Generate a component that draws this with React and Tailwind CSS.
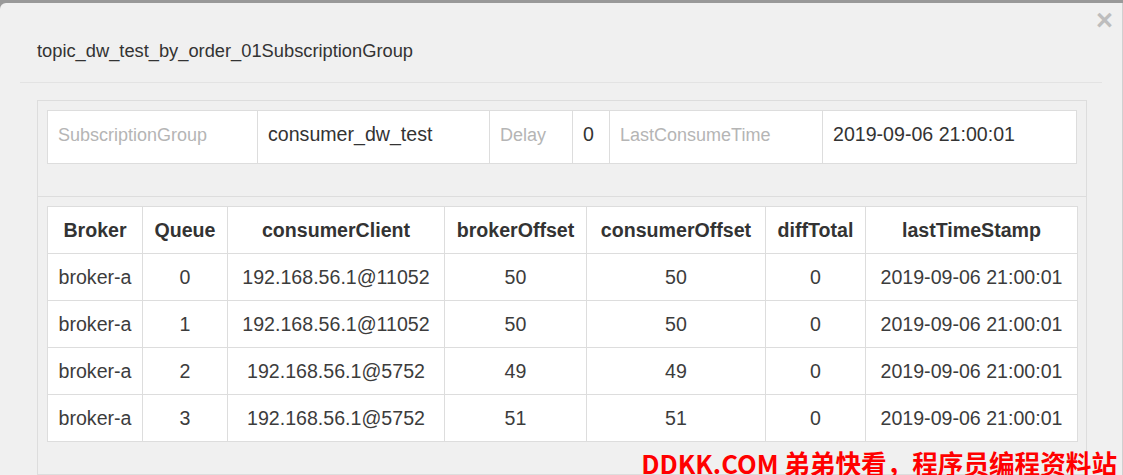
import React from "react";

const cols = [
  { name: "Broker", w: "w-[95px]" },
  { name: "Queue", w: "w-[85px]" },
  { name: "consumerClient", w: "w-[217px]" },
  { name: "brokerOffset", w: "w-[142px]" },
  { name: "consumerOffset", w: "w-[179px]" },
  { name: "diffTotal", w: "w-[100px]" },
  { name: "lastTimeStamp", w: "w-[212px]" },
];

const rows = [
  ["broker-a", "0", "192.168.56.1@11052", "50", "50", "0", "2019-09-06 21:00:01"],
  ["broker-a", "1", "192.168.56.1@11052", "50", "50", "0", "2019-09-06 21:00:01"],
  ["broker-a", "2", "192.168.56.1@5752", "49", "49", "0", "2019-09-06 21:00:01"],
  ["broker-a", "3", "192.168.56.1@5752", "51", "51", "0", "2019-09-06 21:00:01"],
];

export default function App() {
  return (
    <div
      className="relative w-[1123px] h-[475px] overflow-hidden bg-[#999999]"
      style={{ fontFamily: '"Liberation Sans", Arial, sans-serif' }}
    >
      <div className="relative mt-[3px] h-[472px] bg-[#f0f0f0] rounded-tl-[6px] border-r border-[#d0d0d0]">
        <button className="absolute right-[9px] top-[3px] text-[29px] leading-[29px] font-bold text-[#bdbdbd]">
          ×
        </button>
        <div className="mx-[20px] pl-[17px] pt-[35px] pb-[18px] border-b border-[#e3e3e3]">
          <div className="text-[18.3px] leading-[26px] text-[#333]">
            topic_dw_test_by_order_01SubscriptionGroup
          </div>
        </div>
        <div className="ml-[37px] mr-[35px] mt-[17px] border border-[#dddddd]">
          <div className="px-[9px] pt-[9px] pb-[32px] border-b border-[#dddddd]">
            <table className="w-full table-fixed border-collapse bg-white">
              <colgroup>
                <col className="w-[210px]" />
                <col className="w-[232px]" />
                <col className="w-[83px]" />
                <col className="w-[37px]" />
                <col className="w-[213px]" />
                <col />
              </colgroup>
              <tbody>
                <tr className="h-[53px]">
                  <td className="border border-[#dddddd] pl-[10px] pb-[4px] text-[18px] text-[#b5b5b5]">SubscriptionGroup</td>
                  <td className="border border-[#dddddd] pl-[10px] pb-[4px] text-[19.6px] text-[#333]">consumer_dw_test</td>
                  <td className="border border-[#dddddd] pl-[10px] pb-[4px] text-[18px] text-[#b5b5b5]">Delay</td>
                  <td className="border border-[#dddddd] pl-[10px] pb-[4px] text-[19.6px] text-[#333]">0</td>
                  <td className="border border-[#dddddd] pl-[10px] pb-[4px] text-[18px] text-[#b5b5b5]">LastConsumeTime</td>
                  <td className="border border-[#dddddd] pl-[10px] pb-[4px] text-[19.6px] text-[#333]">2019-09-06 21:00:01</td>
                </tr>
              </tbody>
            </table>
          </div>
          <div className="px-[9px] pt-[9px] pb-[32px]">
            <table className="w-full table-fixed border-collapse bg-white text-[19.6px] text-[#333]">
              <colgroup>
                {cols.map((c) => (
                  <col key={c.name} className={c.w} />
                ))}
              </colgroup>
              <thead>
                <tr className="h-[47px]">
                  {cols.map((c) => (
                    <th key={c.name} className="border border-[#dddddd] text-center font-bold leading-[24px] px-[4px]">
                      {c.name}
                    </th>
                  ))}
                </tr>
              </thead>
              <tbody>
                {rows.map((r, i) => (
                  <tr key={i} className="h-[47px]">
                    {r.map((v, j) => (
                      <td key={j} className="border border-[#dddddd] text-center leading-[24px] text-[#3c3c3c] px-[4px] whitespace-nowrap">
                        {v}
                      </td>
                    ))}
                  </tr>
                ))}
              </tbody>
            </table>
          </div>
        </div>
      </div>
      <div
        className="absolute right-[6px] bottom-[-4px] text-[25.6px] leading-[32px] font-bold text-[#ff0000] whitespace-nowrap"
        style={{ fontFamily: '"Noto Sans CJK SC", "Noto Sans", sans-serif' }}
      >
        DDKK.COM 弟弟快看，程序员编程资料站
      </div>
    </div>
  );
}
